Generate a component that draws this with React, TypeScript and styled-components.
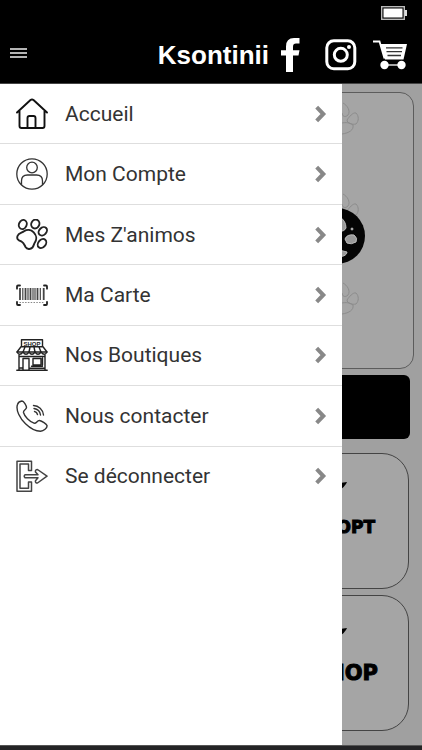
import React from "react";
import styled, { createGlobalStyle } from "styled-components";

const GlobalStyle = createGlobalStyle`
  *, *::before, *::after { box-sizing: border-box; }
  body { margin: 0; background: #a0a0a0; font-family: Roboto, "Liberation Sans", sans-serif; }
  button { font: inherit; border: 0; padding: 0; background: none; cursor: pointer; }
  a { color: inherit; text-decoration: none; }
  svg { display: block; flex: none; }
`;

const Screen = styled.div`
  display: flex;
  flex-direction: column;
  min-height: 100vh;
`;

const Header = styled.header`
  background: #000;
  color: #fff;
  border-bottom: 1px solid #444;
`;

const StatusBar = styled.div`
  display: flex;
  justify-content: flex-end;
  height: 26px;
  padding: 6px 14px 0 0;
`;

const NavBar = styled.div`
  display: flex;
  align-items: center;
  height: 57px;
  padding: 0 14px 0 10px;
`;

const MenuButton = styled.button`
  display: grid;
  gap: 2px;
  width: 17px;
  padding-bottom: 3px;
`;

const MenuLine = styled.span`
  height: 2px;
  background: #b4b4b4;
`;

const Title = styled.h1`
  margin: 0 12px 0 auto;
  font: bold 26px/30px "Liberation Sans", Arial, sans-serif;
`;

const Socials = styled.nav`
  display: flex;
  align-items: center;
`;

const SocialLink = styled.a<{ $gap?: number }>`
  margin-left: ${(p) => p.$gap ?? 0}px;
`;

const Body = styled.div`
  position: relative;
  flex: 1;
  display: flex;
`;

const Page = styled.main`
  flex: 1;
  display: flex;
  flex-direction: column;
  padding: 8px 8px 14px;
`;

const Hero = styled.section`
  display: flex;
  justify-content: flex-end;
  height: 277px;
  padding-right: 45px;
  background: #a5a5a5;
  border: 1px solid #5c5c5c;
  border-radius: 14px;
`;

const CardButton = styled.button`
  height: 64px;
  margin: 6px 4px 14px;
  border-radius: 6px;
  background: #000;
`;

const Tiles = styled.div`
  display: grid;
  grid-template-columns: 1fr 1fr;
  gap: 6px;
  padding: 0 5px;
`;

const Tile = styled.a<{ $large?: boolean }>`
  grid-column: 2;
  display: flex;
  flex-direction: column;
  align-items: flex-end;
  height: 136px;
  padding: ${(p) => (p.$large ? 32 : 28)}px 30px 0 0;
  background: #a5a5a5;
  border: 1px solid #444;
  border-radius: 27px;
  color: #000;
`;

const TileLabel = styled.span<{ $large?: boolean }>`
  margin-top: 20px;
  padding-right: ${(p) => (p.$large ? 0 : 3)}px;
  font: bold ${(p) => (p.$large ? 21 : 17)}px/30px "DejaVu Sans", sans-serif;
  -webkit-text-stroke: 1px #000;
`;

const Drawer = styled.nav`
  position: absolute;
  inset: 0 auto 0 0;
  width: 81%;
  background: #fff;
`;

const MenuList = styled.ul`
  display: flex;
  flex-direction: column;
  height: 423px;
  margin: 0;
  padding: 0;
  list-style: none;
`;

const MenuItem = styled.li`
  flex: 1;
  display: flex;
  border-bottom: 1px solid #dedede;
  &:last-child { border-bottom-color: transparent; }
`;

const MenuLink = styled.a`
  flex: 1;
  display: flex;
  align-items: center;
  gap: 17px;
  padding: 0 15px 0 16px;
  color: #333;
  font-size: 21px;
  line-height: 28px;
`;

const MenuLabel = styled.span`
  flex: 1;
`;

const BottomBar = styled.footer`
  height: 5px;
  background: #242426;
  border-top: 1px solid #555;
`;

const Icon = ({ children, w = 1.5, color = "#222" }: { children: React.ReactNode; w?: number; color?: string }) => (
  <svg width="32" height="32" viewBox="0 0 32 32" fill="none" stroke={color} strokeWidth={w} strokeLinecap="round" strokeLinejoin="round" aria-hidden="true">
    {children}
  </svg>
);

const HomeIcon = () => (
  <Icon w={1.9} color="#111">
    <path d="M1 14.5 14.5 2q1.500-1.200 3 0L31 14.500M3.500 13v15q0 2 2 2h21q2 0 2-2V13M11.500 30V20q0-2 2-2h4q2 0 2 2v10" />
  </Icon>
);

const AccountIcon = () => (
  <Icon w={1.3} color="#333">
    <circle cx="16" cy="16" r="15.2" />
    <circle cx="16" cy="9.500" r="5.300" />
    <path d="M5.500 26.500V23q0-6 6-6h9q6 0 6 6v3.500" />
  </Icon>
);

const PawIcon = () => (
  <Icon w={1.9}>
    <path d="M1.500 17c1-3 4.500-3 6.500-4.700 3-2 7-1.800 9.700 1s3.300 7 1.300 10c-1.300 2-1.200 3.500-2.500 5.200-2 2.200-5.500 1.800-7-.5-1.300-2.500-1.500-4-4-5.500C1.500 21.500.700 19.500 1.500 17Z" />
    <ellipse cx="6.800" cy="5.500" rx="3.800" ry="4.700" transform="rotate(25 6.800 5.500)" />
    <ellipse cx="19.300" cy="5" rx="4" ry="4.500" transform="rotate(25 19.300 5)" />
    <ellipse cx="26.800" cy="12.300" rx="3.600" ry="4.700" transform="rotate(45 26.800 12.300)" />
    <ellipse cx="26" cy="24.500" rx="3.700" ry="5" transform="rotate(40 26 24.500)" />
  </Icon>
);

const BarcodeIcon = () => (
  <Icon w={1.8}>
    <path d="M4 6.500H2Q1 6.500 1 7.500v2.200M28 6.500h2q1 0 1 1v2.200M4 26H2q-1 0-1-1v-2.200M28 26h2q1 0 1-1v-2.200" />
    <g strokeLinecap="butt" stroke="#444">
      <path d="M4 9v12M9.500 9v12M14.500 9v12M21.500 9v12M27.700 9v12" strokeWidth="1.800" />
      <path d="M6.800 9v12M12 9v12M17 9v12M19 9v12M24.300 9v12" strokeWidth="1.200" />
      <path d="M3.500 23.500h25" strokeWidth="1" strokeDasharray="1.500 1.300" stroke="#888" />
    </g>
  </Icon>
);

const ShopIcon = () => (
  <Icon w={1.4}>
    <path d="M5.500 7V.8h21V7" />
    <text x="16" y="6.500" textAnchor="middle" fontFamily="Liberation Sans, sans-serif" fontWeight="bold" fontSize="6" fill="#222" stroke="none">SHOP</text>
    <path d="M5 7.800h22l4 5.200H1ZM9 8l-2 5M14 8l-1 5M18 8l1 5M23 8l2 5" />
    <path d="M1 13q2.500 4.500 6 0 3 4.500 6 0 3 4.500 6 0 3 4.500 6 0 3.500 4.500 6 0" />
    <path d="M3 17.500h26M3 16v15M29 16v15M.8 31.200h30.400M7 31V19.500h6V31M17 19.500h8v6.500h-8ZM4 29h3M14 29.300h15M15.500 27.200h11M26.500 19v7" />
  </Icon>
);

const PhoneIcon = () => (
  <Icon w={1.4} color="#333">
    <path d="M1.500 4.500C2 2.500 4 1.200 6 1c1.800 0 4.500 5 4.500 6.500 0 2-3.500 2.700-3 5 1 4 6 9 10.500 10.700 2.500.8 3-3 5.500-2.700 2.500.500 7 3.500 7.500 5 .5 2.500-3.500 5.500-6.500 5.700-4 0-10-2.700-15-7.500C4 18.500-.5 10 1.500 4.500Z" />
    <path d="M17.500 5.500c5 0 9.500 4 10 9.500M18 8.500c3.500.5 6 3 6.500 6.500M18.500 11.500c1.500.3 2.700 1.500 3 3" />
  </Icon>
);

const LogoutIcon = () => (
  <Icon w={1.5} color="#444">
    <path d="M15.500 10.500V1.200H1v30h14.500V22h-3v6.300H4V4h8.500v6.500Z" />
    <path d="M9 14.700h13L19.500 12q-.500-2.500 2-2.500L31 16.200l-9.500 6.800q-2.500 0-2-2.300l2.500-2.900H9q-1.500-1.500 0-3.100Z" />
  </Icon>
);

const Chevron = () => (
  <svg width="12" height="18" viewBox="0 0 12 18" fill="none" stroke="#888" strokeWidth="4" aria-hidden="true">
    <path d="M1.700 2.200 8.300 9l-6.600 6.800" strokeLinejoin="miter" />
  </svg>
);

const Battery = () => (
  <svg width="27" height="15" viewBox="0 0 27 15" role="img" aria-label="Batterie">
    <rect x=".7" y=".7" width="22.600" height="12.600" fill="none" stroke="#bbb" strokeWidth="1.400" />
    <rect x="2.500" y="2.500" width="19" height="9" fill="#fff" />
    <rect x="23.500" y="4" width="2.500" height="6" fill="#ddd" />
  </svg>
);

const FacebookIcon = () => (
  <svg width="20" height="34" viewBox="0 0 20 34" fill="#fff">
    <path d="M5 34V17.500H0v-5.300h5V8.500Q5 0 13 0h5.500v5.500H15q-3 0-3 3.200v3.500h6.500l-1 5.300H12V34Z" />
  </svg>
);

const InstagramIcon = () => (
  <svg width="32" height="32" viewBox="0 0 32 32" fill="none" stroke="#fff">
    <rect x="1.800" y="1.800" width="28" height="28" rx="7" strokeWidth="3" />
    <circle cx="15.800" cy="15.800" r="6.500" strokeWidth="3" />
    <circle cx="24" cy="8" r="2" fill="#fff" stroke="none" />
  </svg>
);

const CartIcon = () => (
  <svg width="35" height="30" viewBox="0 0 35 30" fill="none" stroke="#fff">
    <path d="M0 1.500h6.500l5 17" strokeWidth="1.800" />
    <path d="M7.500 4H34L30.500 19.500H12Z" fill="#fff" stroke="none" />
    <path d="M13 7.800h16.500M13.500 11.700h15.500M14.500 15.500H28" stroke="#333" strokeWidth="1.300" />
    <path d="M12 25h16" strokeWidth="1.300" />
    <circle cx="11.500" cy="25" r="4.200" fill="#fff" stroke="none" />
    <circle cx="28.500" cy="25" r="4.200" fill="#fff" stroke="none" />
  </svg>
);

const GhostPaw = ({ y }: { y: number }) => (
  <g transform={`translate(0 ${y})`} stroke="#8c8c8c" fill="none">
    <path d="M35 0c4 2 8 8 5 12-3 3-6 1-6-2M39 17c2-3 6-8 9-7 3 3 3 8 0 11-4 1-9-1-9-4ZM30 21c6-2 11-2 15 1 1 5-4 8-11 9" />
  </g>
);

const HeroArt = () => (
  <svg width="60" height="275" viewBox="0 0 60 275" aria-hidden="true">
    <GhostPaw y={10} />
    <GhostPaw y={101} />
    <GhostPaw y={190} />
    <circle cx="29" cy="143" r="28" fill="#050505" />
    <g fill="#999" stroke="#bbb">
      <path d="M32 124q6 4 6 11-2 4-7 3Z" />
      <path d="M37 146q2-5 9-4 4 3 2 7-5 3-9 1Z" />
      <path d="M31 157l8 2q0 4-8 5Z" />
      <circle cx="44" cy="136" r="1" />
    </g>
  </svg>
);

const TileMark = () => (
  <svg width="40" height="10" viewBox="0 0 40 10" aria-hidden="true">
    <path d="M26 2 40 0q-2 5-8 8Z" />
  </svg>
);

const MarkSlot = styled.span`
  padding-right: 31px;
`;

const items = [
  { label: "Accueil", icon: HomeIcon },
  { label: "Mon Compte", icon: AccountIcon },
  { label: "Mes Z'animos", icon: PawIcon },
  { label: "Ma Carte", icon: BarcodeIcon },
  { label: "Nos Boutiques", icon: ShopIcon },
  { label: "Nous contacter", icon: PhoneIcon },
  { label: "Se déconnecter", icon: LogoutIcon },
];

export default function App() {
  return (
    <Screen>
      <GlobalStyle />
      <Header>
        <StatusBar><Battery /></StatusBar>
        <NavBar>
          <MenuButton aria-label="Menu"><MenuLine /><MenuLine /><MenuLine /></MenuButton>
          <Title>Ksontinii</Title>
          <Socials>
            <SocialLink href="#facebook" aria-label="Facebook"><FacebookIcon /></SocialLink>
            <SocialLink href="#instagram" aria-label="Instagram" $gap={24}><InstagramIcon /></SocialLink>
            <SocialLink href="#panier" aria-label="Panier" $gap={16}><CartIcon /></SocialLink>
          </Socials>
        </NavBar>
      </Header>
      <Body>
        <Page>
          <Hero><HeroArt /></Hero>
          <CardButton aria-label="Ma Carte" />
          <Tiles>
            <Tile href="#adopt">
              <MarkSlot><TileMark /></MarkSlot>
              <TileLabel>ADOPT</TileLabel>
            </Tile>
            <Tile href="#shop" $large>
              <MarkSlot><TileMark /></MarkSlot>
              <TileLabel $large>SHOP</TileLabel>
            </Tile>
          </Tiles>
        </Page>
        <Drawer aria-label="Menu principal">
          <MenuList>
            {items.map(({ label, icon: ItemIcon }) => (
              <MenuItem key={label}>
                <MenuLink href="#">
                  <ItemIcon />
                  <MenuLabel>{label}</MenuLabel>
                  <Chevron />
                </MenuLink>
              </MenuItem>
            ))}
          </MenuList>
        </Drawer>
      </Body>
      <BottomBar />
    </Screen>
  );
}
